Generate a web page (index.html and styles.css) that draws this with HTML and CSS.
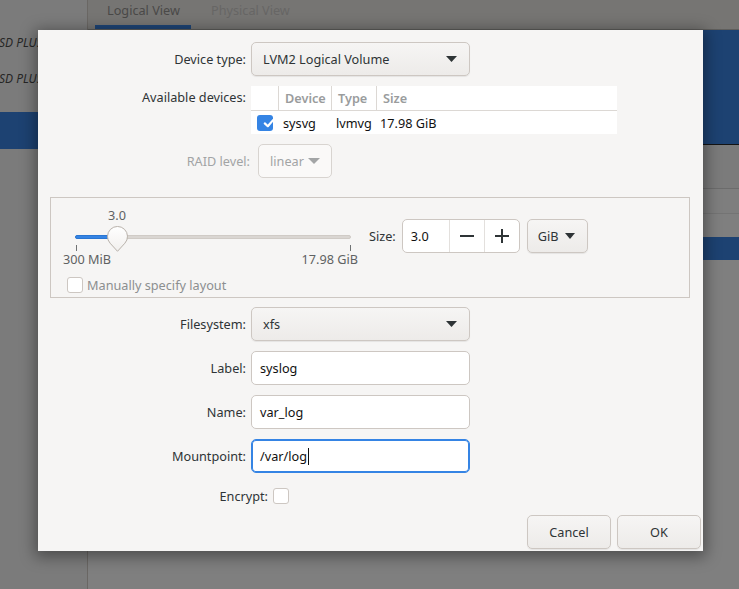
FILE: index.html
```html
<!DOCTYPE html>
<html>
<head>
<meta charset="utf-8">
<link rel="stylesheet" href="styles.css">
</head>
<body>
<div class="app">
  <aside class="sidebar">
    <div class="disk">SD PLUS 240GB</div>
    <div class="disk">SD PLUS 480GB</div>
    <div class="disk-sel"></div>
  </aside>
  <main class="main">
    <nav class="tabs">
      <span class="tab active">Logical View</span>
      <span class="tab">Physical View</span>
    </nav>
    <div class="vg-block"></div>
    <div class="lv-row lv-a"></div>
    <div class="lv-row lv-b"></div>
    <div class="lv-row lv-c"></div>
    <div class="lv-sel"></div>
  </main>
</div>

<div class="dialog">
  <div class="form">
    <span class="lbl">Device type:</span>
    <div class="combo wide">
      <span>LVM2 Logical Volume</span>
      <svg class="arrow" width="11" height="6" viewBox="0 0 11 6"><polygon points="0,0 11,0 5.5,6" fill="#2e3436"/></svg>
    </div>

    <span class="lbl top">Available devices:</span>
    <div class="devices">
      <div class="dhead">
        <span class="c-chk"></span>
        <span class="c-dev">Device</span>
        <span class="c-type">Type</span>
        <span class="c-size">Size</span>
      </div>
      <div class="drow">
        <span class="c-chk"><span class="check on"><svg width="16" height="16" viewBox="0 0 16 16"><path d="M3.8 8.4 L6.8 11.2 L12.3 4.9" fill="none" stroke="#fff" stroke-width="2.2" stroke-linecap="round" stroke-linejoin="round"/></svg></span></span>
        <span class="c-dev">sysvg</span>
        <span class="c-type">lvmvg</span>
        <span class="c-size">17.98 GiB</span>
      </div>
    </div>

    <span class="lbl dis raid">RAID level:</span>
    <div class="combo small disabled">
      <span>linear</span>
      <svg class="arrow" width="12" height="6" viewBox="0 0 12 6"><polygon points="0,0 12,0 6,6" fill="#a3a5a6"/></svg>
    </div>
  </div>

  <div class="frame">
    <div class="size-row">
      <div class="slider">
        <span class="slider-val" style="left:54px">3.0</span>
        <div class="track"><div class="fill" style="width:42px"></div></div>
        <svg class="handle" style="left:44px" width="21" height="26" viewBox="0 0 21 26">
          <defs><linearGradient id="hg" x1="0" y1="0" x2="0" y2="1"><stop offset="0" stop-color="#ffffff"/><stop offset="1" stop-color="#f1efed"/></linearGradient></defs>
          <path d="M10.5 25.3 L3.1 17.2 A10 10 0 1 1 17.9 17.2 Z" fill="url(#hg)" stroke="#b8b1aa" stroke-width="1"/>
        </svg>
        <span class="tick t-min"></span>
        <span class="tick t-max"></span>
        <span class="mark m-min">300 MiB</span>
        <span class="mark m-max">17.98 GiB</span>
      </div>
      <span class="size-lbl">Size:</span>
      <div class="spin">
        <span class="spin-val">3.0</span>
        <span class="spin-btn"><svg width="14" height="14" viewBox="0 0 14 14"><line x1="0" y1="7" x2="14" y2="7" stroke="#2e3436" stroke-width="2"/></svg></span>
        <span class="spin-btn"><svg width="14" height="14" viewBox="0 0 14 14"><line x1="0" y1="7" x2="14" y2="7" stroke="#2e3436" stroke-width="2"/><line x1="7" y1="0" x2="7" y2="14" stroke="#2e3436" stroke-width="2"/></svg></span>
      </div>
      <div class="combo unit">
        <span>GiB</span>
        <svg class="arrow" width="10" height="6" viewBox="0 0 10 6"><polygon points="0,0 10,0 5,6" fill="#2e3436"/></svg>
      </div>
    </div>
    <div class="manual-row">
      <span class="check off"></span>
      <span class="manual-lbl">Manually specify layout</span>
    </div>
  </div>

  <div class="form form2">
    <span class="lbl">Filesystem:</span>
    <div class="combo wide">
      <span>xfs</span>
      <svg class="arrow" width="11" height="6" viewBox="0 0 11 6"><polygon points="0,0 11,0 5.5,6" fill="#2e3436"/></svg>
    </div>

    <span class="lbl">Label:</span>
    <div class="entry">syslog</div>

    <span class="lbl">Name:</span>
    <div class="entry">var_log</div>

    <span class="lbl">Mountpoint:</span>
    <div class="entry focus">/var/log<span class="caret"></span></div>
  </div>

  <div class="encrypt-row">
    <span class="enc-lbl">Encrypt:</span>
    <span class="check off"></span>
  </div>

  <div class="actions">
    <button class="btn">Cancel</button>
    <button class="btn">OK</button>
  </div>
</div>
</body>
</html>
```

FILE: styles.css
```css
* { box-sizing: border-box; }
html, body {
  margin: 0;
  padding: 0;
  width: 739px;
  height: 589px;
  overflow: hidden;
  font-family: "Noto Sans", "Open Sans", sans-serif;
  font-size: 12.7px;
  color: #2e3436;
}

/* ---------- dimmed background app ---------- */
.app {
  display: grid;
  grid-template-columns: 87px 1px 1fr;
  width: 739px;
  height: 589px;
  background: #7e7e7e;
}
.app::before {
  content: "";
  grid-column: 2;
  grid-row: 1;
  background: #6a6764;
}
.sidebar {
  grid-column: 1;
  grid-row: 1;
  background: #7b7b7b;
  padding-top: 33px;
  overflow: hidden;
}
.disk {
  height: 36px;
  line-height: 20px;
  font-style: italic;
  font-size: 12px;
  color: #262626;
  white-space: nowrap;
  margin-left: -1px;
}
.disk-sel {
  margin-top: 7px;
  height: 37px;
  background: #1d4272;
}
.main {
  grid-column: 3;
  grid-row: 1;
  display: flex;
  flex-direction: column;
  background: #7f7f7f;
}
.tabs {
  height: 30px;
  display: flex;
  gap: 8px;
  padding-left: 7px;
  background: #767573;
  border-bottom: 1px solid #5f5e5c;
}
.tab {
  padding: 2px 11px 0 12px;
  line-height: 17px;
  font-size: 12.7px;
  color: #676665;
}
.tab.active {
  color: #4a4948;
  border-bottom: 4px solid #1e4475;
}
.vg-block {
  height: 115px;
  background: #1d4272;
  border-bottom: 1px solid #141414;
}
.lv-row { background: #7b7b7b; }
.lv-a { height: 44px; border-bottom: 1px solid #6c6c6c; }
.lv-b { height: 25px; border-bottom: 1px solid #747474; background: #7e7e7e; }
.lv-c { height: 23px; background: #7f7f7f; }
.lv-sel { height: 23px; background: #1d4272; }

/* ---------- dialog ---------- */
.dialog {
  position: absolute;
  left: 38px;
  top: 30px;
  width: 665px;
  height: 521px;
  background: #f6f5f4;
  box-shadow: 0 3px 14px 3px rgba(0, 0, 0, 0.38);
  padding: 12px 0 2px 0;
  display: flex;
  flex-direction: column;
}
.form {
  display: grid;
  grid-template-columns: 208px auto;
  column-gap: 5px;
  row-gap: 10px;
  justify-items: start;
  align-items: center;
}
.lbl {
  justify-self: end;
  white-space: nowrap;
  color: #2e3436;
}
.lbl.top { align-self: start; padding-top: 2px; }
.lbl.dis { color: #a2a4a5; }
.lbl.raid { margin-right: -4px; }

.combo {
  height: 34px;
  border: 1px solid #cdc7c2;
  border-radius: 5px;
  background: linear-gradient(#f6f5f4, #edebe9);
  box-shadow: 0 1px 1px rgba(0, 0, 0, 0.07);
  display: flex;
  align-items: center;
  justify-content: space-between;
  color: #2e3436;
}
.combo.wide { width: 219px; padding: 0 12px 0 11px; }
.combo.small {
  width: 74px;
  margin-left: 7px;
  padding: 0 11px 0 11px;
}
.combo.disabled {
  background: #faf9f8;
  border-color: #d8d4d0;
  box-shadow: none;
  color: #a2a4a5;
}
.combo.unit {
  width: 61px;
  padding: 0 12px 0 10px;
  margin-left: 7px;
}

.devices {
  width: 366px;
  background: #fff;
}
.dhead, .drow {
  display: grid;
  grid-template-columns: 27px 53px 45px 1fr;
}
.dhead {
  height: 25px;
  border-bottom: 1px solid #dcd8d4;
  font-weight: 600;
  color: #9a9c9d;
}
.dhead span {
  line-height: 24px;
  padding-left: 6px;
}
.dhead span + span { border-left: 1px solid #dcd8d4; }
.drow { height: 23px; align-items: center; }
.drow span { padding-left: 4px; color: #111; }
.drow .c-dev { padding-left: 5px; }
.drow .c-type { padding-left: 5px; }
.drow .c-chk { padding-left: 6px; display: flex; }

.check {
  width: 16px;
  height: 16px;
  border-radius: 3px;
  display: inline-block;
}
.check svg { display: block; }
.check.on { background: #3584e4; border: none; }
.check.off {
  background: #fff;
  border: 1px solid #cdc7c2;
}

/* frame with slider */
.frame {
  margin: 19px 13px 0 12px;
  height: 101px;
  border: 1px solid #cdc7c2;
  padding: 7px 0 0 12px;
}
.size-row {
  display: flex;
  align-items: center;
  height: 62px;
}
.slider {
  position: relative;
  width: 295px;
  height: 62px;
  flex: none;
}
.slider-val {
  position: absolute;
  top: 1px;
  width: 0;
  display: flex;
  justify-content: center;
  line-height: 18px;
  color: #5f6263;
}
.track {
  position: absolute;
  left: 12px;
  top: 30px;
  width: 276px;
  height: 4px;
  border-radius: 2px;
  background: #dad6d2;
  border: 1px solid #d0cbc6;
}
.fill {
  height: 4px;
  margin: -1px 0 0 -1px;
  border-radius: 2px;
  background: #3584e4;
  border: 1px solid #2a76d2;
}
.handle {
  position: absolute;
  top: 21px;
}
.tick {
  position: absolute;
  top: 40px;
  width: 1px;
  height: 6px;
  background: #6f7273;
}
.t-min { left: 13px; }
.t-max { left: 287px; }
.mark {
  position: absolute;
  top: 45px;
  line-height: 18px;
  color: #5f6263;
  white-space: nowrap;
}
.m-min { left: 0; }
.m-max { right: 0; }

.size-lbl {
  margin-left: 11px;
  margin-right: 6px;
  color: #2e3436;
}
.spin {
  display: flex;
  width: 118px;
  height: 34px;
  border: 1px solid #cdc7c2;
  border-radius: 5px;
  background: #fff;
}
.spin-val {
  width: 47px;
  padding-left: 8px;
  line-height: 32px;
  color: #111;
}
.spin-btn {
  width: 35px;
  border-left: 1px solid #e3e0dd;
  display: flex;
  align-items: center;
  justify-content: center;
}
.spin-btn svg { display: block; }

.manual-row {
  margin-top: 10px;
  padding-left: 4px;
  display: flex;
  align-items: center;
  gap: 4px;
  height: 16px;
}
.manual-lbl { color: #8c8f90; }

.form2 { margin-top: 9px; }
.entry {
  width: 219px;
  height: 34px;
  border: 1px solid #cdc7c2;
  border-radius: 5px;
  background: #fff;
  padding-left: 8px;
  line-height: 32px;
  color: #111;
  display: flex;
  align-items: center;
}
.entry.focus {
  border-color: #3584e4;
  box-shadow: inset 0 0 0 1px #3584e4;
}
.caret {
  display: inline-block;
  width: 1px;
  height: 17px;
  background: #111;
  margin-left: 1px;
}

.encrypt-row {
  margin-top: 15px;
  display: flex;
  align-items: center;
  height: 16px;
}
.enc-lbl {
  width: 230px;
  text-align: right;
  margin-right: 5px;
}

.actions {
  margin-top: 11px;
  display: flex;
  justify-content: flex-end;
  gap: 6px;
  padding-right: 2px;
}
.btn {
  width: 84px;
  height: 34px;
  border: 1px solid #cdc7c2;
  border-radius: 5px;
  background: linear-gradient(#f6f5f4, #edebe9);
  box-shadow: 0 1px 1px rgba(0, 0, 0, 0.07);
  font-family: inherit;
  font-size: 12.7px;
  color: #2e3436;
  padding: 0;
}
```
